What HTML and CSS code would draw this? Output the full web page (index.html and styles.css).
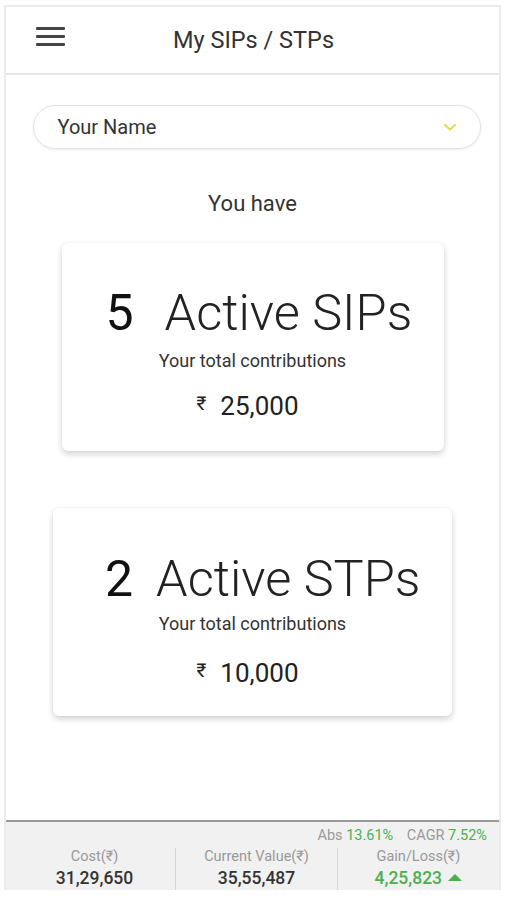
FILE: index.html
```html
<!DOCTYPE html>
<html lang="en">
<head>
    <meta charset="UTF-8">
    <meta name="viewport" content="width=device-width, initial-scale=1.0">
    <title>My SIPs / STPs</title>
    <link rel="stylesheet" href="styles.css">
</head>
<body>
    <div class="phone">
        <div class="header">
            <div class="menu-icon">
                <span></span><span></span><span></span>
            </div>
            <div class="title">My SIPs / STPs</div>
        </div>

        <div class="content">
            <div class="name-select">
                <span>Your Name</span>
                <svg class="chevron" width="14" height="9" viewBox="0 0 14 9">
                    <path d="M2 2 L7 6.5 L12 2" fill="none" stroke="#ecd55a" stroke-width="2.2" stroke-linecap="round" stroke-linejoin="round"/>
                </svg>
            </div>

            <div class="you-have">You have</div>

            <!-- SIP 카드 -->
            <div class="card card-sip">
                <div class="card-count"><span class="num">5</span><span class="label">Active SIPs</span></div>
                <div class="card-sub">Your total contributions</div>
                <div class="card-amount"><span class="rupee">₹</span>25,000</div>
            </div>

            <!-- STP 카드 -->
            <div class="card card-stp">
                <div class="card-count"><span class="num">2</span><span class="label">Active STPs</span></div>
                <div class="card-sub">Your total contributions</div>
                <div class="card-amount"><span class="rupee">₹</span>10,000</div>
            </div>
        </div>

        <div class="footer">
            <div class="returns">
                <span class="muted">Abs</span> <span class="green">13.61%</span>
                <span class="muted cagr">CAGR</span> <span class="green">7.52%</span>
            </div>
            <div class="stats">
                <div class="stat">
                    <div class="stat-label">Cost(₹)</div>
                    <div class="stat-value">31,29,650</div>
                </div>
                <div class="stat">
                    <div class="stat-label">Current Value(₹)</div>
                    <div class="stat-value">35,55,487</div>
                </div>
                <div class="stat">
                    <div class="stat-label">Gain/Loss(₹)</div>
                    <div class="stat-value green">4,25,823 <span class="arrow"></span></div>
                </div>
            </div>
        </div>
    </div>
</body>
</html>
```

FILE: styles.css
```css
html, body {
margin: 0;
padding: 0;
background-color: #fff;
font-family: Roboto, "Liberation Sans", sans-serif;
color: #333;
}

/* 전체 화면 프레임 */
.phone {
width: 497px;
height: 885px;
margin: 5px 0 0 4px;
border: 2px solid #ececec;
border-bottom: none;
box-sizing: border-box;
display: flex;
flex-direction: column;
}

/* 상단 헤더 */
.header {
height: 66px;
flex-shrink: 0;
border-bottom: 2px solid #e6e6e6;
display: flex;
align-items: center;
position: relative;
}
.menu-icon {
display: flex;
flex-direction: column;
gap: 5px;
margin-left: 30px;
margin-bottom: 8px;
}
.menu-icon span {
width: 29px;
height: 3px;
background-color: #444;
border-radius: 1px;
}
.title {
position: absolute;
left: 2px;
right: 0;
text-align: center;
font-size: 23.5px;
color: #333;
pointer-events: none;
}

/* 본문 */
.content {
flex: 1;
display: flex;
flex-direction: column;
align-items: center;
}
.name-select {
width: 448px;
height: 44px;
margin: 30px 0 0 8px;
box-sizing: border-box;
border: 1.5px solid #e2e2e2;
border-radius: 22px;
box-shadow: 0 1px 3px rgba(0, 0, 0, 0.08);
display: flex;
align-items: center;
justify-content: space-between;
padding: 0 23px 0 24px;
font-size: 20px;
color: #333;
}
.you-have {
margin-top: 42px;
font-size: 22px;
color: #333;
}

.card {
height: 208px;
box-sizing: border-box;
background-color: #fff;
border-radius: 6px;
box-shadow: 0 3px 6px rgba(0, 0, 0, 0.18), 0 0 2px rgba(0, 0, 0, 0.06);
display: flex;
flex-direction: column;
align-items: center;
}
.card-sip { width: 382px; margin-top: 27px; padding-top: 40px; }
.card-stp { width: 399px; margin-top: 57px; padding-top: 41px; }

.card-count {
display: flex;
align-items: baseline;
align-self: flex-start;
line-height: 60px;
color: #222;
}
.card-count .num {
font-size: 50px;
font-weight: 400;
color: #111;
}
.card-count .label {
font-size: 50.5px;
font-weight: 300;
}
.card-sip .card-count { margin-left: 44px; }
.card-sip .num { margin-right: 31px; }
.card-stp .card-count { margin-left: 52px; }
.card-stp .num { margin-right: 23px; }

.card-sub {
font-size: 18px;
color: #333;
margin-top: 7px;
}
.card-stp .card-sub { margin-top: 4px; }
.card-amount {
font-size: 26px;
color: #222;
margin-top: 20px;
padding-right: 10px;
}
.card-stp .card-amount { margin-top: 24px; }
.card-amount .rupee {
font-size: 19px;
vertical-align: 5px;
margin-right: 14px;
}

/* 하단 요약 바 */
.footer {
height: 70px;
flex-shrink: 0;
background-color: #f1f1f1;
border-top: 2px solid #9a9a9a;
box-sizing: border-box;
}
.returns {
text-align: right;
font-size: 14.5px;
padding: 6px 12px 0 0;
line-height: 16px;
}
.returns .cagr { margin-left: 10px; }
.muted { color: #999; }
.green { color: #4caf50; }
.stats {
display: flex;
}
.stat {
flex: 1;
text-align: center;
border-left: 1px solid #d6d6d6;
margin-top: 4px;
}
.stat:first-child { border-left: none; padding-left: 8px; }
.stat-label {
font-size: 14.5px;
color: #999;
line-height: 18px;
}
.stat-value {
font-size: 17.5px;
color: #333;
font-weight: 500;
line-height: 24px;
}
.stat-value.green { color: #4caf50; }
.arrow {
display: inline-block;
width: 0;
height: 0;
border-left: 7px solid transparent;
border-right: 7px solid transparent;
border-bottom: 7px solid #4caf50;
vertical-align: 3px;
margin-left: 2px;
}
```
